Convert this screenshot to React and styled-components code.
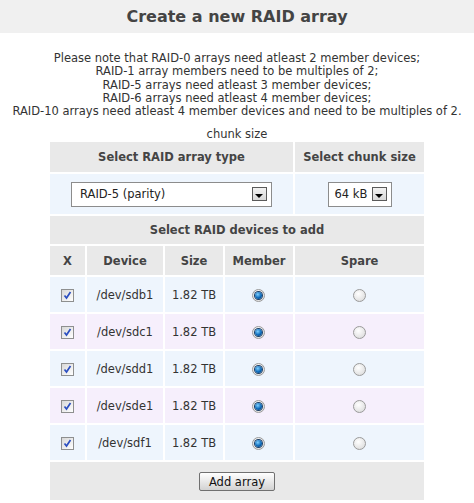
import React from "react";
import styled, { createGlobalStyle } from "styled-components";

const Global = createGlobalStyle`
  html, body { margin: 0; padding: 0; background: #ffffff; }
  body { font-family: "DejaVu Sans", Verdana, sans-serif; font-size: 11.5px; color: #333333; }
`;

const Page = styled.div`
  width: 474px;
  height: 503px;
  overflow: hidden;
`;

const TitleBar = styled.h1`
  margin: 0;
  height: 33px;
  line-height: 34px;
  background: #f0f0f0;
  color: #444444;
  font-size: 16px;
  font-weight: bold;
  text-align: center;
`;

const Notes = styled.p`
  margin: 19px 0 0 0;
  text-align: center;
  line-height: 13.3px;
  color: #333333;
`;

const Table = styled.table`
  margin: 10px auto 0 auto;
  width: 378px;
  table-layout: fixed;
  border-collapse: separate;
  border-spacing: 2px;
`;

const Caption = styled.caption`
  line-height: 12px;
  padding: 0;
  color: #333333;
`;

const Head = styled.th`
  background: #e9e9e9;
  color: #444444;
  font-weight: bold;
  text-align: center;
  padding: 0;
  height: ${(p) => p.$h}px;
`;

const Cell = styled.td`
  background: ${(p) => (p.$alt ? "#f6effc" : "#eef5fd")};
  text-align: center;
  padding: 0;
  height: ${(p) => p.$h || 35}px;
  color: #333333;
`;

const Footer = styled.td`
  background: #e9e9e9;
  text-align: center;
  padding: 0;
  height: 38px;
`;

const SelectBox = styled.div`
  display: inline-flex;
  align-items: center;
  justify-content: space-between;
  box-sizing: border-box;
  width: ${(p) => p.$w}px;
  height: 25px;
  border: 1px solid #8c8c8c;
  background: #ffffff;
  padding: 0 4px 0 ${(p) => p.$pl || 8}px;
  vertical-align: middle;
  color: #222222;
`;

const DropBtn = styled.span`
  box-sizing: border-box;
  width: 15px;
  height: 14px;
  border: 1px solid #5a5a5a;
  background: linear-gradient(#f2f2f2, #d8d8d8);
  display: flex;
  align-items: center;
  justify-content: center;
  &::after {
    content: "";
    display: block;
    margin-top: 3px;
    border-left: 4px solid transparent;
    border-right: 4px solid transparent;
    border-top: 4px solid #000000;
  }
`;

const Check = styled.span`
  display: inline-flex;
  box-sizing: border-box;
  width: 13px;
  height: 13px;
  border: 1px solid #8e8f8f;
  background: linear-gradient(135deg, #d8d8d8, #ffffff);
  align-items: center;
  justify-content: center;
  vertical-align: middle;
`;

const Radio = styled.span`
  display: inline-flex;
  box-sizing: border-box;
  width: 13px;
  height: 13px;
  border-radius: 50%;
  border: 1px solid #9a9a9a;
  background: radial-gradient(circle at 40% 35%, #ffffff, #d6d6d6);
  align-items: center;
  justify-content: center;
  vertical-align: middle;
  &::after {
    content: "";
    display: ${(p) => (p.$on ? "block" : "none")};
    width: 7px;
    height: 7px;
    border-radius: 50%;
    box-shadow: 0 0 0 1px #1d3f66;
    background: radial-gradient(circle at 40% 35%, #7fd0ff, #0b68b8 55%, #053a70);
  }
`;

const Button = styled.button`
  font-family: "DejaVu Sans", Verdana, sans-serif;
  font-size: 11.5px;
  color: #111111;
  width: 76px;
  height: 19px;
  padding: 0;
  border: 1px solid #707070;
  border-radius: 2px;
  background: linear-gradient(#ffffff, #e4e4e4 60%, #d2d2d2);
  margin-top: 1px;
`;

const devices = ["/dev/sdb1", "/dev/sdc1", "/dev/sdd1", "/dev/sde1", "/dev/sdf1"];

const CheckMark = () => (
  <svg width="9" height="9" viewBox="0 0 9 9">
    <path d="M1.5 4.5 L3.5 7 L7.5 1" fill="none" stroke="#2c4fc0" strokeWidth="1.7" />
  </svg>
);

export default function App() {
  return (
    <Page>
      <Global />
      <TitleBar>Create a new RAID array</TitleBar>
      <Notes>
        Please note that RAID-0 arrays need atleast 2 member devices;
        <br />
        RAID-1 array members need to be multiples of 2;
        <br />
        RAID-5 arrays need atleast 3 member devices;
        <br />
        RAID-6 arrays need atleast 4 member devices;
        <br />
        RAID-10 arrays need atleast 4 member devices and need to be multiples of 2.
      </Notes>
      <Table>
        <Caption>chunk size</Caption>
        <colgroup>
          <col style={{ width: 35 }} />
          <col style={{ width: 76 }} />
          <col style={{ width: 58 }} />
          <col style={{ width: 68 }} />
          <col style={{ width: 129 }} />
        </colgroup>
        <tbody>
          <tr>
            <Head colSpan={4} $h={30}>Select RAID array type</Head>
            <Head $h={30}>Select chunk size</Head>
          </tr>
          <tr>
            <Cell colSpan={4} $h={40}>
              <SelectBox $w={201}>
                <span>RAID-5 (parity)</span>
                <DropBtn />
              </SelectBox>
            </Cell>
            <Cell $h={40}>
              <SelectBox $w={64} $pl={6}>
                <span>64 kB</span>
                <DropBtn />
              </SelectBox>
            </Cell>
          </tr>
          <tr>
            <Head colSpan={5} $h={28}>Select RAID devices to add</Head>
          </tr>
          <tr>
            <Head $h={29}>X</Head>
            <Head $h={29}>Device</Head>
            <Head $h={29}>Size</Head>
            <Head $h={29}>Member</Head>
            <Head $h={29}>Spare</Head>
          </tr>
          {devices.map((d, i) => {
            const alt = i % 2 === 1;
            return (
              <tr key={d}>
                <Cell $alt={alt}>
                  <Check>
                    <CheckMark />
                  </Check>
                </Cell>
                <Cell $alt={alt}>{d}</Cell>
                <Cell $alt={alt}>1.82 TB</Cell>
                <Cell $alt={alt}>
                  <Radio $on />
                </Cell>
                <Cell $alt={alt}>
                  <Radio />
                </Cell>
              </tr>
            );
          })}
          <tr>
            <Footer colSpan={5}>
              <Button>Add array</Button>
            </Footer>
          </tr>
        </tbody>
      </Table>
    </Page>
  );
}
